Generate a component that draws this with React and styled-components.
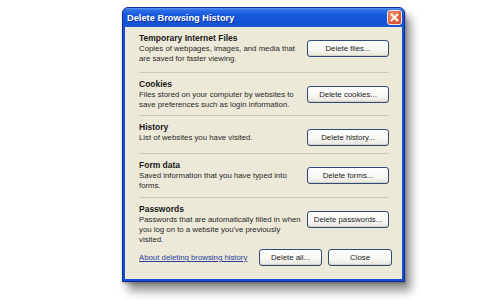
import React from "react";
import styled, { createGlobalStyle } from "styled-components";

const Global = createGlobalStyle`
  html, body { margin: 0; padding: 0; background: #ffffff; }
  body { width: 500px; height: 300px; overflow: hidden; }
`;

const Page = styled.div`
  width: 500px;
  height: 300px;
  padding: 7px 0 0 122px;
  box-sizing: border-box;
  font-family: "Liberation Sans", Arial, sans-serif;
`;

const Window = styled.div`
  width: 283px;
  height: 275px;
  display: flex;
  flex-direction: column;
  border-radius: 6px 6px 0 0;
  box-shadow: 6px 9px 10px rgba(0, 0, 0, 0.42), 1px 2px 3px rgba(0, 0, 0, 0.25);
  background: #1a4fd4;
  box-sizing: border-box;
  border: 1px solid #0d2d9c;
`;

const TitleBar = styled.div`
  height: 19px;
  flex: none;
  display: flex;
  align-items: center;
  justify-content: space-between;
  padding: 0 2px 0 4px;
  border-radius: 5px 5px 0 0;
  background: linear-gradient(
    to bottom,
    #5a98f4 0%,
    #2c6ee6 12%,
    #1557dc 40%,
    #1352d6 75%,
    #1a55d2 100%
  );
`;

const Title = styled.span`
  color: #ffffff;
  font-weight: bold;
  font-size: 9.2px;
  letter-spacing: 0.05px;
  text-shadow: 1px 1px 0 rgba(10, 30, 110, 0.6);
`;

const CloseButton = styled.div`
  width: 15px;
  height: 15px;
  box-sizing: border-box;
  border: 1px solid #f4e8e0;
  border-radius: 3px;
  background: radial-gradient(circle at 35% 30%, #f39a78 0%, #e3623c 55%, #c9462a 100%);
  display: flex;
  align-items: center;
  justify-content: center;
`;

const Body = styled.div`
  flex: 1;
  margin: 0 2px 2px 2px;
  background: #ece9d8;
  padding: 0 13px 0 14px;
  display: flex;
  flex-direction: column;
`;

const Section = styled.div`
  display: flex;
  justify-content: space-between;
  align-items: flex-start;
  box-sizing: border-box;
  padding-top: 6px;
  height: ${(p) => (p.$h ? `${p.$h}px` : "auto")};
  border-bottom: ${(p) => (p.$last ? "none" : "1px solid #cdcabb")};
`;

const TextCol = styled.div`
  width: 166px;
  display: flex;
  flex-direction: column;
`;

const Heading = styled.div`
  font-weight: bold;
  font-size: 8.5px;
  line-height: 11px;
  color: #1a1a1a;
`;

const Desc = styled.div`
  font-size: 7.8px;
  line-height: 10px;
  color: #2a2a2a;
`;

const Button = styled.button`
  width: ${(p) => p.$w || 82}px;
  height: 17px;
  margin-top: ${(p) => (p.$mt !== undefined ? p.$mt : 7)}px;
  padding: 0;
  box-sizing: border-box;
  border: 1px solid #2f4a78;
  border-radius: 3px;
  background: linear-gradient(to bottom, #ffffff 0%, #f7f7f3 60%, #e6e4dc 100%);
  box-shadow: inset 0 -1px 0 #d6d0c0;
  font-family: "Liberation Sans", Arial, sans-serif;
  font-size: 7.8px;
  color: #222;
  flex: none;
  cursor: default;
`;

const Footer = styled.div`
  display: flex;
  align-items: center;
  margin-top: 4px;
`;

const Link = styled.a`
  font-size: 7.8px;
  color: #2b3f9a;
  text-decoration: underline;
  flex: 1;
  cursor: pointer;
`;

const FooterButtons = styled.div`
  display: flex;
  gap: 6px;
  margin-right: -3px;
`;

const sections = [
  {
    title: "Temporary Internet Files",
    lines: ["Copies of webpages, images, and media that", "are saved for faster viewing."],
    button: "Delete files...",
    h: 46,
  },
  {
    title: "Cookies",
    lines: ["Files stored on your computer by websites to", "save preferences such as login information."],
    button: "Delete cookies...",
    h: 43,
  },
  {
    title: "History",
    lines: ["List of websites you have visited."],
    button: "Delete history...",
    h: 38,
  },
  {
    title: "Form data",
    lines: ["Saved information that you have typed into", "forms."],
    button: "Delete forms...",
    h: 44,
  },
  {
    title: "Passwords",
    lines: [
      "Passwords that are automatically filled in when",
      "you log on to a website you've previously",
      "visited.",
    ],
    button: "Delete passwords...",
    last: true,
  },
];

export default function App() {
  return (
    <>
      <Global />
      <Page>
        <Window>
          <TitleBar>
            <Title>Delete Browsing History</Title>
            <CloseButton>
              <svg width="9" height="9" viewBox="0 0 9 9">
                <path d="M1.5 1.5 L7.5 7.5 M7.5 1.5 L1.5 7.5" stroke="#ffffff" strokeWidth="1.8" strokeLinecap="square" />
              </svg>
            </CloseButton>
          </TitleBar>
          <Body>
            {sections.map((s) => (
              <Section key={s.title} $h={s.h} $last={s.last}>
                <TextCol>
                  <Heading>{s.title}</Heading>
                  {s.lines.map((l) => (
                    <Desc key={l}>{l}</Desc>
                  ))}
                </TextCol>
                <Button>{s.button}</Button>
              </Section>
            ))}
            <Footer>
              <Link>About deleting browsing history</Link>
              <FooterButtons>
                <Button $w={63} $mt={0}>Delete all...</Button>
                <Button $w={64} $mt={0}>Close</Button>
              </FooterButtons>
            </Footer>
          </Body>
        </Window>
      </Page>
    </>
  );
}
